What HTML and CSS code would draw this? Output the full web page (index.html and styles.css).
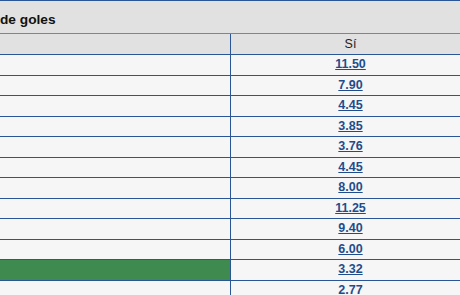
FILE: index.html
```html
<!DOCTYPE html>
<html lang="es">
<head>
<meta charset="utf-8">
<title>Número de goles</title>
<link rel="stylesheet" href="styles.css">
</head>
<body>
<div class="panel">
  <div class="title">de goles</div>
  <div class="row head">
    <div class="cell label"></div>
    <div class="cell val">Sí</div>
  </div>
  <div class="row"><div class="cell label"></div><div class="cell val"><a href="#">11.50</a></div></div>
  <div class="row"><div class="cell label"></div><div class="cell val"><a href="#">7.90</a></div></div>
  <div class="row"><div class="cell label"></div><div class="cell val"><a href="#">4.45</a></div></div>
  <div class="row"><div class="cell label"></div><div class="cell val"><a href="#">3.85</a></div></div>
  <div class="row"><div class="cell label"></div><div class="cell val"><a href="#">3.76</a></div></div>
  <div class="row"><div class="cell label"></div><div class="cell val"><a href="#">4.45</a></div></div>
  <div class="row"><div class="cell label"></div><div class="cell val"><a href="#">8.00</a></div></div>
  <div class="row"><div class="cell label"></div><div class="cell val"><a href="#">11.25</a></div></div>
  <div class="row"><div class="cell label"></div><div class="cell val"><a href="#">9.40</a></div></div>
  <div class="row"><div class="cell label"></div><div class="cell val"><a href="#">6.00</a></div></div>
  <div class="row"><div class="cell label win"></div><div class="cell val"><a href="#">3.32</a></div></div>
  <div class="row"><div class="cell label"></div><div class="cell val"><a href="#">2.77</a></div></div>
</div>
</body>
</html>
```
FILE: styles.css
```css
html, body {
  margin: 0;
  padding: 0;
  overflow: hidden;
  background: #f6f6f6;
  font-family: "Liberation Sans", Arial, sans-serif;
}

.panel {
  width: 470px;
  border-top: 1px solid #2a5596;
}

.title {
  height: 27px;
  padding-top: 5px;
  line-height: 27px;
  font-size: 13.7px;
  font-weight: bold;
  color: #111;
  background: #e1e1e1;
  border-bottom: 1px solid #6f86ad;
  white-space: nowrap;
}

.row {
  display: grid;
  grid-template-columns: 231px 1fr;
  height: 19.55px;
  border-bottom: 1px solid #2a5596;
  background: #f6f6f6;
}

.row.head {
  height: 20px;
  background: #e1e1e1;
}

.cell {
  font-size: 12.5px;
  line-height: 19.55px;
}

.head .cell {
  line-height: 20px;
}

.label {
  border-right: 1px solid #2a5596;
}

.label.win {
  background: #3f8a4e;
}

.val {
  text-align: center;
  color: #222;
}

.val a {
  color: #1f4d8c;
  font-weight: bold;
  text-decoration: underline;
}
```
